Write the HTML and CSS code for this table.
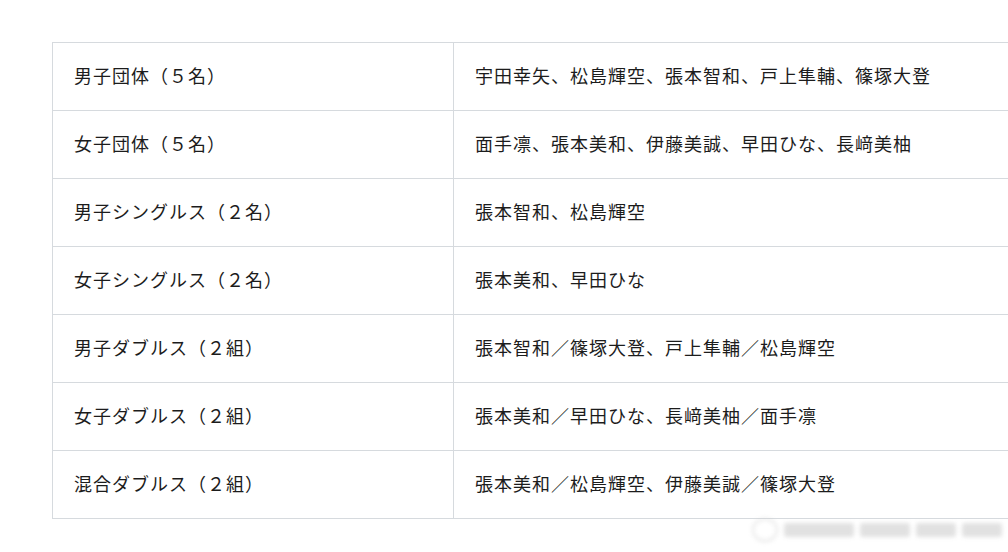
FILE: index.html
```html
<!DOCTYPE html>
<html lang="ja">
<head>
<meta charset="utf-8">
<link rel="stylesheet" href="styles.css">
</head>
<body>
<div class="page">
  <table class="roster">
    <tbody>
      <tr><td class="cat">男子団体（５名）</td><td class="names">宇田幸矢、松島輝空、張本智和、戸上隼輔、篠塚大登</td></tr>
      <tr><td class="cat">女子団体（５名）</td><td class="names">面手凛、張本美和、伊藤美誠、早田ひな、長﨑美柚</td></tr>
      <tr><td class="cat">男子シングルス（２名）</td><td class="names">張本智和、松島輝空</td></tr>
      <tr><td class="cat">女子シングルス（２名）</td><td class="names">張本美和、早田ひな</td></tr>
      <tr><td class="cat">男子ダブルス（２組）</td><td class="names">張本智和／篠塚大登、戸上隼輔／松島輝空</td></tr>
      <tr><td class="cat">女子ダブルス（２組）</td><td class="names">張本美和／早田ひな、長﨑美柚／面手凛</td></tr>
      <tr><td class="cat">混合ダブルス（２組）</td><td class="names">張本美和／松島輝空、伊藤美誠／篠塚大登</td></tr>
    </tbody>
  </table>
  <div class="watermark" aria-hidden="true">
    <span class="wm-logo"></span>
    <span class="wm-bar w1"></span>
    <span class="wm-bar w2"></span>
    <span class="wm-bar w3"></span>
    <span class="wm-bar w4"></span>
  </div>
</div>
</body>
</html>
```
FILE: styles.css
```css
html, body {
  margin: 0;
  padding: 0;
  background: #ffffff;
}
body {
  width: 1008px;
  height: 552px;
  overflow: hidden;
  font-family: "Noto Sans CJK JP", "Noto Sans", sans-serif;
  color: #1c1c1c;
}
.page {
  position: relative;
  width: 1008px;
  height: 552px;
  padding: 42px 0 0 52px;
  box-sizing: border-box;
}
.roster {
  border-collapse: collapse;
  width: 1000px;
  table-layout: fixed;
}
.roster td {
  border: 1px solid #d6dade;
  height: 68px;
  padding: 0 0 3px 21px;
  box-sizing: border-box;
  font-size: 18px;
  letter-spacing: 1px;
  line-height: 1;
  vertical-align: middle;
  white-space: nowrap;
}
.roster td.cat {
  width: 401px;
}
.watermark {
  position: absolute;
  left: 752px;
  top: 512px;
  width: 250px;
  height: 36px;
  display: flex;
  align-items: center;
  gap: 6px;
  filter: blur(2px);
  opacity: 0.45;
}
.wm-logo {
  width: 22px;
  height: 20px;
  border: 2px solid #c8c8c8;
  border-radius: 50%;
}
.wm-bar {
  height: 14px;
  background: #bdbdbd;
  border-radius: 3px;
}
.w1 { width: 70px; }
.w2 { width: 50px; }
.w3 { width: 40px; }
.w4 { width: 40px; }
```
